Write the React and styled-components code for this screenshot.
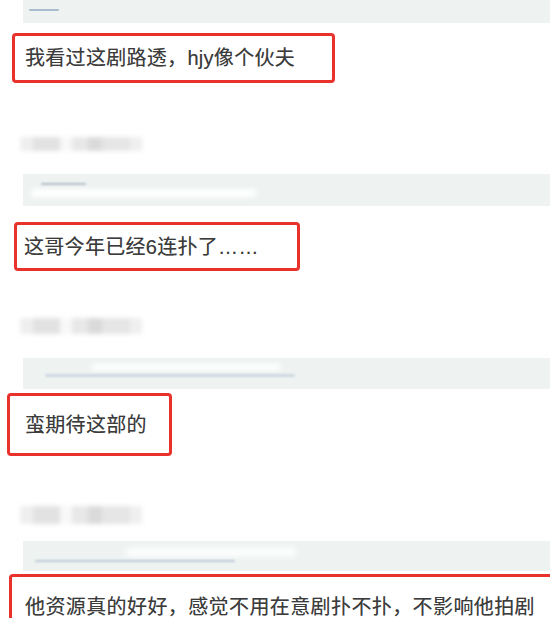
import React from "react";
import styled, { createGlobalStyle } from "styled-components";

const Global = createGlobalStyle`
  html, body { margin: 0; padding: 0; background: #ffffff; }
  body { font-family: "Liberation Sans", "Noto Sans CJK SC", sans-serif; }
`;

const Page = styled.div`
  width: 550px;
  height: 618px;
  overflow: hidden;
  background: #ffffff;
  display: flex;
  flex-direction: column;
`;

const Item = styled.section`
  display: flex;
  flex-direction: column;
  flex-shrink: 0;
`;

const NameRow = styled.div`
  display: flex;
  margin-top: ${(p) => p.$top}px;
  margin-left: 20px;
  height: ${(p) => p.$h}px;
  filter: blur(2px);
`;

const Cell = styled.div`
  width: ${(p) => p.$w}px;
  height: 100%;
  background: ${(p) => p.$c};
`;

const QuoteBar = styled.div`
  margin-top: ${(p) => p.$top}px;
  margin-left: 23px;
  height: ${(p) => p.$h}px;
  background: #eef3f2;
  display: flex;
  flex-direction: column;
  justify-content: ${(p) => p.$justify || "center"};
  gap: 4px;
  padding: 0 0 0 ${(p) => p.$pad || 8}px;
  box-sizing: border-box;
  overflow: hidden;
`;

const Spacer = styled.div`
  height: ${(p) => p.$h}px;
`;

const Smudge = styled.div`
  width: ${(p) => p.$w}px;
  height: ${(p) => p.$h || 2}px;
  margin-left: ${(p) => p.$x || 0}px;
  background: ${(p) => p.$c};
  border-radius: 3px;
  filter: blur(${(p) => p.$b || 0.8}px);
`;

const CommentBox = styled.div`
  margin-top: ${(p) => p.$top}px;
  margin-left: ${(p) => p.$left}px;
  width: ${(p) => p.$w}px;
  height: ${(p) => p.$h}px;
  box-sizing: border-box;
  border: 3px solid #e8322b;
  border-radius: 4px;
  display: flex;
  align-items: center;
  padding-left: ${(p) => p.$pad}px;
  flex-shrink: 0;
`;

const CommentText = styled.p`
  margin: 0;
  font-family: "Liberation Sans", "Noto Sans CJK SC", sans-serif;
  font-size: 20px;
  line-height: 24px;
  color: #3c3c3c;
  white-space: nowrap;
  letter-spacing: ${(p) => p.$ls ?? 0.3}px;
  text-shadow: 0 0 0.6px rgba(60, 60, 60, 0.5);
`;

const nameCells = [
  [13, "#efefef"],
  [27, "#e2e2e2"],
  [12, "#f8f8f8"],
  [16, "#e8e8e8"],
  [14, "#dadada"],
  [28, "#e6e6e6"],
  [12, "#efefef"],
];

function Name({ top, h }) {
  return (
    <NameRow $top={top} $h={h}>
      {nameCells.map(([w, c], i) => (
        <Cell key={i} $w={w} $c={c} />
      ))}
    </NameRow>
  );
}

export default function App() {
  return (
    <Page>
      <Global />
      <Item>
        <QuoteBar $top={-9} $h={32} $justify="flex-end" $pad={6}>
          <Smudge $w={30} $c="#a9bbd0" $b={0.7} />
          <Spacer $h={8} />
        </QuoteBar>
        <CommentBox $top={10} $left={12} $w={323} $h={50} $pad={10}>
          <CommentText>我看过这剧路透，hjy像个伙夫</CommentText>
        </CommentBox>
      </Item>

      <Item>
        <Name top={54} h={14} />
        <QuoteBar $top={23} $h={32} $pad={14} $justify="flex-start">
          <Spacer $h={5} />
          <Smudge $w={45} $c="#b4bcc6" $b={0.8} $x={4} />
          <Smudge $w={225} $h={8} $c="#ffffff" $b={2.5} $x={-6} />
        </QuoteBar>
        <CommentBox $top={16} $left={14} $w={286} $h={49} $pad={7}>
          <CommentText>这哥今年已经6连扑了……</CommentText>
        </CommentBox>
      </Item>

      <Item>
        <Name top={47} h={16} />
        <QuoteBar $top={24} $h={31} $pad={8} $justify="flex-start">
          <Spacer $h={2} />
          <Smudge $w={190} $h={6} $c="#ffffff" $b={2.5} $x={60} />
          <Smudge $w={250} $h={3} $c="#d0d7df" $b={1} $x={14} />
        </QuoteBar>
        <CommentBox $top={4} $left={7} $w={165} $h={63} $pad={15}>
          <CommentText>蛮期待这部的</CommentText>
        </CommentBox>
      </Item>

      <Item>
        <Name top={50} h={18} />
        <QuoteBar $top={17} $h={30} $pad={8} $justify="flex-start">
          <Spacer $h={3} />
          <Smudge $w={170} $h={8} $c="#ffffff" $b={3} $x={95} />
          <Smudge $w={200} $h={2} $c="#bcc8d8" $b={0.9} $x={4} />
        </QuoteBar>
        <CommentBox $top={3} $left={9} $w={560} $h={66} $pad={13}>
          <CommentText $ls={0.4}>他资源真的好好，感觉不用在意剧扑不扑，不影响他拍剧</CommentText>
        </CommentBox>
      </Item>
    </Page>
  );
}
